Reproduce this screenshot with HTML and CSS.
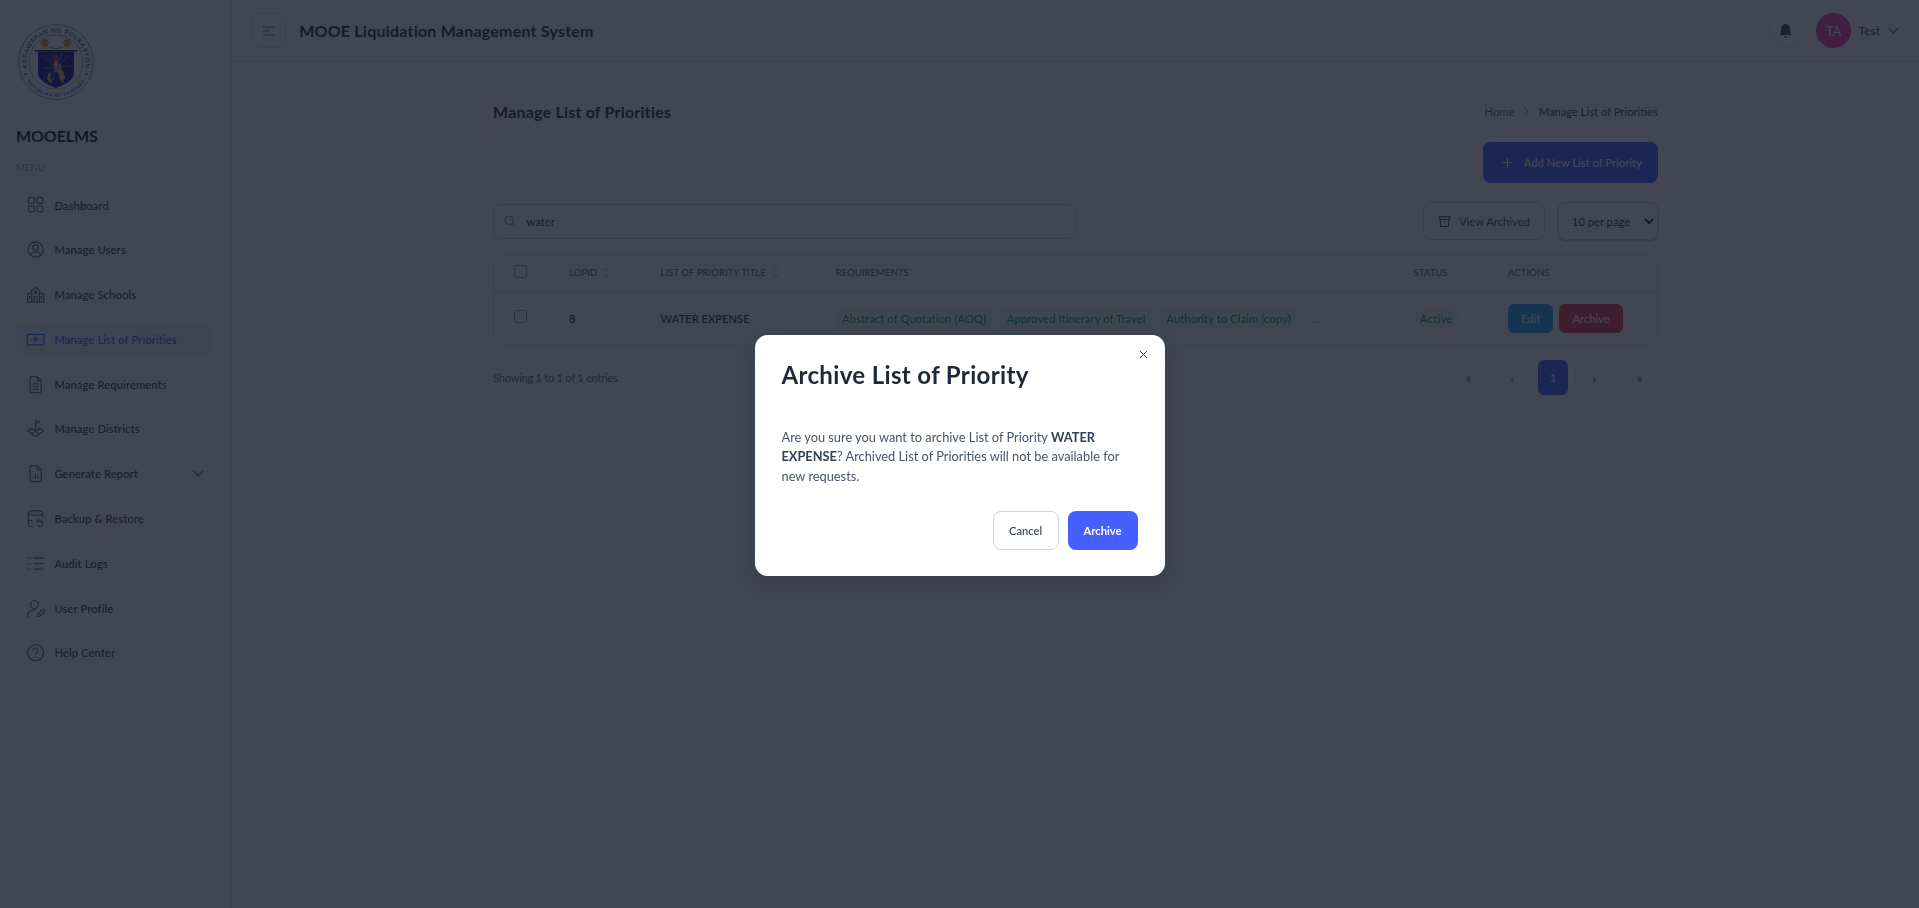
FILE: index.html
```html
<!DOCTYPE html>
<html lang="en">
<head>
<meta charset="utf-8">
<title>MOOE Liquidation Management System</title>
<link rel="stylesheet" href="styles.css">
</head>
<body>
<div class="app">
  <aside class="sidebar">
    <svg class="logo" viewBox="0 0 76 76" aria-label="Kagawaran ng Edukasyon seal">
      <defs>
        <path id="arcTop" d="M9.150 44.100 A29.500 29.500 0 1 1 66.850 44.100"/>
        <path id="arcBottom" d="M6.300 52.800 A35 35 0 0 0 69.700 52.800"/>
      </defs>
      <circle cx="38" cy="38" r="37.400" fill="#fff" stroke="#1a2a80" stroke-width=".5"/>
      <circle cx="38" cy="38" r="27" fill="#fff" stroke="#1a2a80" stroke-width=".4"/>
      <text class="logo-top"><textPath href="#arcTop" startOffset="50%" text-anchor="middle">KAGAWARAN NG EDUKASYON</textPath></text>
      <text class="logo-bottom"><textPath href="#arcBottom" startOffset="50%" text-anchor="middle">REPUBLIKA NG PILIPINAS</textPath></text>
      <circle cx="7.500" cy="50" r="1" fill="#1a2a80"/><circle cx="68.500" cy="50" r="1" fill="#1a2a80"/>
      <path d="M25 14l4 1 2 4-2 4-5-1-2-4z M51 14l-4 1-2 4 2 4 5-1 2-4z" fill="#e0a83a"/>
      <path d="M31 23q7 3 14 0" fill="none" stroke="#333" stroke-width="1" stroke-dasharray="1 .6"/>
      <path d="M17 26h42v1.400H17z" fill="#333"/>
      <path d="M20 27.500h36v21c0 8-9 12-18 15.500-9-3.500-18-7.500-18-15.500z" fill="#14148c"/>
      <path d="M38 44L24 32M38 44L28 30M38 44L34 29M38 44L44 29M38 44L50 32M38 44L25 44M38 44L52 42M38 44L28 54M38 44L34 58" stroke="#fff" stroke-width=".35"/>
      <path d="M36 37c-1-4 0-6 2-8 2 2 3 5 2 8z" fill="#d8283f"/>
      <path d="M36 37h4l-.6 11h-2.800z" fill="#e8b84a"/>
      <path d="M41 39l3 3-1 3 3 3-1 2 3 3-2 2-1 4-3-3-1-5-2-4 2-3z" fill="#e8b84a"/>
      <path d="M31 48l2 2-1 4 2 3-2 2-3-4z" fill="#e8b84a"/>
    </svg>
    <div class="brand">MOOELMS</div>
    <div class="menu-label">MENU</div>
    <nav class="nav">
      <a class="nav-item"><svg class="nav-icon" viewBox="0 0 24 24"><rect x="3" y="3" width="7.500" height="7.500" rx="1.800"/><rect x="13.500" y="3" width="7.500" height="7.500" rx="1.800"/><rect x="3" y="13.500" width="7.500" height="7.500" rx="1.800"/><rect x="13.500" y="13.500" width="7.500" height="7.500" rx="1.800"/></svg><span>Dashboard</span></a>
      <a class="nav-item"><svg class="nav-icon" viewBox="0 0 24 24"><circle cx="12" cy="12" r="9.500"/><circle cx="12" cy="9.500" r="3.300"/><path d="M5.800 19c1-3 3.300-4.500 6.200-4.500s5.200 1.500 6.200 4.500"/></svg><span>Manage Users</span></a>
      <a class="nav-item"><svg class="nav-icon" viewBox="0 0 24 24"><path d="M2 21V11.500q0-1 1-1h4M22 21V11.500q0-1-1-1h-4M1.500 21.500h21M7 21.500V7l5-4 5 4v14.500"/><circle cx="12" cy="9" r="1.500"/><path d="M9.800 21.500v-5a2.200 2.200 0 0 1 4.400 0v5M4.500 14v3M19.500 14v3"/></svg><span>Manage Schools</span></a>
      <a class="nav-item active"><svg class="nav-icon" viewBox="0 0 24 24"><rect x="1.500" y="5.500" width="21" height="13" rx="2"/><circle cx="12" cy="12" r="2"/><path d="M6 12h.5M17.500 12h.5"/></svg><span>Manage List of Priorities</span></a>
      <a class="nav-item"><svg class="nav-icon" viewBox="0 0 24 24"><path d="M14 2H7a2 2 0 0 0-2 2v16a2 2 0 0 0 2 2h10a2 2 0 0 0 2-2V7z"/><path d="M14 2v5h5M8.500 11h7M8.500 14.500h7M8.500 18h7"/></svg><span>Manage Requirements</span></a>
      <a class="nav-item"><svg class="nav-icon" viewBox="0 0 24 24"><path d="M12 13V1.500l5 2.500-5 2.500"/><path d="M7 11.500l-5 3.500 5 3.500 5-3.500 5 3.500 5-3.500-5-3.500-5 3.500zM7 18.500l5 3.500 5-3.500"/></svg><span>Manage Districts</span></a>
      <a class="nav-item"><svg class="nav-icon" viewBox="0 0 24 24"><path d="M14 2H7a2 2 0 0 0-2 2v16a2 2 0 0 0 2 2h10a2 2 0 0 0 2-2V7z"/><path d="M14 2v5h5M9 18v-2.500M12 18v-5M15 18v-3.500"/></svg><span>Generate Report</span><svg class="nav-chevron" viewBox="0 0 16 16"><path d="M2 5l6 6 6-6"/></svg></a>
      <a class="nav-item"><svg class="nav-icon" viewBox="0 0 24 24"><ellipse cx="12" cy="5" rx="9" ry="3"/><path d="M3 5v14q0 2.500 5 3M21 5v5M3 12q0 2.500 5 3"/><path d="M13 15h5a3.500 3.500 0 1 1-3.500 5M13 15l2-2M13 15l2 2"/></svg><span>Backup &amp; Restore</span></a>
      <a class="nav-item"><svg class="nav-icon" viewBox="0 0 24 24"><path d="M9.500 5h12M9.500 12h12M9.500 19h12"/><path class="dots" d="M2 5h4M2 12h4M2 19h4"/></svg><span>Audit Logs</span></a>
      <a class="nav-item"><svg class="nav-icon" viewBox="0 0 24 24"><circle cx="10.500" cy="7" r="5"/><path d="M2 22c0-5 3.500-8 8.500-8"/><path d="M14 22l1-3 5.500-5.500a1.500 1.500 0 0 1 2.500 2.500L17 21.500z"/></svg><span>User Profile</span></a>
      <a class="nav-item"><svg class="nav-icon" viewBox="0 0 24 24"><circle cx="12" cy="12" r="10"/><path d="M9 9.500a3 3 0 1 1 4.500 2.600c-1 .6-1.500 1.300-1.500 2.400M12 17.500v.5"/></svg><span>Help Center</span></a>
    </nav>
  </aside>

  <div class="main-column">
    <header class="topbar">
      <div class="topbar-left">
        <button class="menu-btn" type="button"><svg viewBox="0 0 16 12"><path d="M1 1h14M1 6h8M1 11h14"/></svg></button>
        <h1 class="app-title">MOOE Liquidation Management System</h1>
      </div>
      <div class="topbar-right">
        <button class="bell-btn" type="button"><svg viewBox="0 0 24 24"><path d="M12 2a2 2 0 0 1 2 1.500c3 1 4.500 3.500 4.500 6.500v5l2 3.500h-17l2-3.500v-5c0-3 1.500-5.500 4.500-6.500A2 2 0 0 1 12 2zM9.500 20h5a2.500 2.500 0 0 1-5 0z"/></svg></button>
        <span class="avatar">TA</span>
        <span class="user-name">Test</span>
        <svg class="user-chevron" viewBox="0 0 16 16"><path d="M2 5l6 6 6-6"/></svg>
      </div>
    </header>

    <main class="content">
      <div class="page-head">
        <h2 class="page-title">Manage List of Priorities</h2>
        <div class="breadcrumb"><span class="crumb-home">Home</span><svg viewBox="0 0 8 12"><path d="M1.500 1l5 5-5 5"/></svg><span class="crumb-current">Manage List of Priorities</span></div>
      </div>
      <div class="add-row">
        <button class="add-btn" type="button"><svg viewBox="0 0 12 12"><path d="M6 .5v11M.5 6h11"/></svg>Add New List of Priority</button>
      </div>
      <div class="toolbar">
        <div class="search"><svg viewBox="0 0 24 24"><circle cx="11" cy="11" r="8.500"/><path d="M17.500 17.500L22 22"/></svg><span>water</span></div>
        <div class="toolbar-right">
          <button class="archived-btn" type="button"><svg viewBox="0 0 24 24"><path d="M2.500 3h19v5h-19zM4.500 8v13h15V8M9.500 12.500h5"/></svg>View Archived</button>
          <select class="per-page"><option>10 per page</option></select>
        </div>
      </div>
      <div class="table-wrap">
        <table class="data-table">
          <thead>
            <tr>
              <th class="col-check"><span class="checkbox"></span></th>
              <th class="col-id"><span class="sort-head">LOPID<svg viewBox="0 0 8 14"><path d="M1 5l3-3.500L7 5M1 9l3 3.500L7 9"/></svg></span></th>
              <th class="col-title"><span class="sort-head">LIST OF PRIORITY TITLE<svg viewBox="0 0 8 14"><path d="M1 5l3-3.500L7 5M1 9l3 3.500L7 9"/></svg></span></th>
              <th class="col-req">REQUIREMENTS</th>
              <th class="col-status">STATUS</th>
              <th class="col-actions">ACTIONS</th>
            </tr>
          </thead>
          <tbody>
            <tr>
              <td><span class="checkbox"></span></td>
              <td class="strong">8</td>
              <td class="strong">WATER EXPENSE</td>
              <td><div class="chips"><span class="chip">Abstract of Quotation (AOQ)</span><span class="chip">Approved Itinerary of Travel</span><span class="chip">Authority to Claim (copy)</span><span class="more">...</span></div></td>
              <td><span class="status">Active</span></td>
              <td><div class="actions"><button class="edit-btn" type="button">Edit</button><button class="archive-btn" type="button">Archive</button></div></td>
            </tr>
          </tbody>
        </table>
      </div>
      <div class="table-foot">
        <span class="entries">Showing 1 to 1 of 1 entries</span>
        <div class="pager">
          <button class="page-btn" type="button">«</button>
          <button class="page-btn" type="button">‹</button>
          <button class="page-btn current" type="button">1</button>
          <button class="page-btn next" type="button">›</button>
          <button class="page-btn" type="button">»</button>
        </div>
      </div>
    </main>
  </div>
</div>

<div class="overlay">
  <div class="modal">
    <svg class="modal-close" viewBox="0 0 10 10"><path d="M1 1l8 8M9 1l-8 8"/></svg>
    <h3 class="modal-title">Archive List of Priority</h3>
    <p class="modal-text">Are you sure you want to archive List of Priority <strong>WATER EXPENSE</strong>? Archived List of Priorities will not be available for new requests.</p>
    <div class="modal-actions">
      <button class="btn-cancel" type="button">Cancel</button>
      <button class="btn-archive" type="button">Archive</button>
    </div>
  </div>
</div>
</body>
</html>
```

FILE: styles.css
```css
* { box-sizing: border-box; }
html, body { margin: 0; height: 100%; }
body {
  font-family: "Lato", "Noto Sans", sans-serif;
  font-size: 11.2px;
  color: #1d2939;
  background: #fff;
  overflow: hidden;
}
button, select { font-family: inherit; }
h1, h2, h3, p { margin: 0; }

.app { display: flex; height: 100vh; }

/* Sidebar */
.sidebar {
  width: 232px;
  flex: none;
  border-right: 1px solid #e4e7ec;
  padding: 24px 17px 0 16px;
}
.logo { display: block; width: 76px; height: 76px; margin-left: 2px; }
.logo-top { font: 400 6.300px "Liberation Sans", sans-serif; fill: #1a2a80; letter-spacing: .55px; }
.logo-bottom { font: 400 5px "Liberation Sans", sans-serif; fill: #1a2a80; letter-spacing: .3px; }
.brand { margin-top: 26px; font-size: 16px; line-height: 20px; font-weight: 700; color: #101828; letter-spacing: -.1px; }
.menu-label { margin-top: 15px; font-size: 9.6px; line-height: 14px; color: #98a2b3; }
.nav { display: flex; flex-direction: column; gap: 12.8px; margin-top: 14px; }
.nav-item {
  display: flex;
  align-items: center;
  gap: 9.6px;
  height: 32px;
  padding: 0 9.6px;
  border-radius: 8px;
  font-size: 11.2px;
  font-weight: 500;
  letter-spacing: .12px;
  color: #344054;
}
.nav-icon { width: 19.2px; height: 19.2px; flex: none; fill: none; stroke: #667085; stroke-width: 1.600; stroke-linecap: round; stroke-linejoin: round; }
.nav-icon .dots { stroke-dasharray: 1.500 1.500; stroke-linecap: butt; }
.nav-item.active { background: #ecf3ff; color: #465fff; }
.nav-item.active .nav-icon { stroke: #465fff; }
.nav-chevron { width: 12.8px; height: 12.8px; margin-left: auto; fill: none; stroke: #344054; stroke-width: 1.300; }

/* Top bar */
.main-column { flex: 1; min-width: 0; }
.topbar {
  display: flex;
  align-items: center;
  justify-content: space-between;
  height: 62px;
  padding: 0 19.2px;
  border-bottom: 1px solid #e4e7ec;
}
.topbar-left, .topbar-right { display: flex; align-items: center; }
.topbar-left { gap: 12.8px; }
.menu-btn, .bell-btn {
  display: flex;
  align-items: center;
  justify-content: center;
  width: 35.2px;
  height: 35.2px;
  padding: 0;
  background: #fff;
  border: 1px solid #e4e7ec;
}
.menu-btn { border-radius: 8px; }
.menu-btn svg { width: 12.8px; height: 10px; fill: none; stroke: #667085; stroke-width: 1.300; }
.bell-btn { border-radius: 50%; margin-right: 12.8px; }
.bell-btn svg { width: 17px; height: 17px; fill: #475467; }
.app-title { font-size: 16px; line-height: 24px; font-weight: 700; color: #1d2939; letter-spacing: .22px; }
.avatar {
  display: flex;
  align-items: center;
  justify-content: center;
  width: 35.2px;
  height: 35.2px;
  border-radius: 50%;
  background: #f83ea8;
  color: #fff;
  font-size: 12.8px;
  font-weight: 500;
}
.user-name { margin-left: 7.5px; font-weight: 500; color: #344054; letter-spacing: .3px; }
.user-chevron { width: 12.8px; height: 12.8px; margin-left: 7px; fill: none; stroke: #475467; stroke-width: 1.300; }

/* Content */
.content { width: 1228.8px; margin: 0 auto; padding: 31px 32px 0; }
.page-head { display: flex; align-items: center; justify-content: space-between; height: 36px; }
.page-title { font-size: 16px; font-weight: 700; color: #1d2939; letter-spacing: .2px; }
.breadcrumb { display: flex; align-items: center; gap: 9px; }
.breadcrumb svg { width: 6.400px; height: 9.600px; fill: none; stroke: #667085; stroke-width: 1; }
.crumb-home { color: #667085; }
.crumb-current { color: #344054; }
.add-row { display: flex; justify-content: flex-end; margin-top: 13px; }
.add-btn {
  display: flex;
  align-items: center;
  gap: 11px;
  height: 41px;
  padding: 0 16px 0 19px;
  border: 0;
  border-radius: 8px;
  background: #465fff;
  color: #fff;
  font-size: 11.2px;
  font-weight: 500;
}
.add-btn svg { width: 11px; height: 11px; fill: none; stroke: #fff; stroke-width: 1.200; }
.toolbar { display: flex; align-items: center; justify-content: space-between; margin-top: 19px; height: 38px; }
.search {
  display: flex;
  align-items: center;
  gap: 11px;
  width: 584px;
  height: 35px;
  padding: 0 10px;
  border: 1px solid #d0d5dd;
  border-radius: 8px;
  color: #344054;
}
.search svg { width: 11.500px; height: 11.500px; fill: none; stroke: #667085; stroke-width: 1.800; }
.toolbar-right { display: flex; align-items: center; gap: 13px; }
.archived-btn {
  display: flex;
  align-items: center;
  gap: 8px;
  height: 38px;
  padding: 0 14px;
  background: #fff;
  border: 1px solid #d0d5dd;
  border-radius: 8px;
  color: #475467;
  font-size: 11.2px;
  font-weight: 500;
}
.archived-btn svg { width: 13px; height: 13px; fill: none; stroke: #475467; stroke-width: 2; }
.per-page {
  width: 100px;
  height: 38px;
  padding: 0 0 0 9px;
  background: #fff;
  border: 1px solid #d0d5dd;
  border-radius: 8px;
  box-shadow: 0 1px 2px rgba(16, 24, 40, .3);
  color: #1d2939;
  font-size: 11.2px;
}

/* Table */
.table-wrap { margin-top: 14px; border: 1px solid #e4e7ec; border-radius: 9.600px; }
.data-table { width: 100%; border-collapse: collapse; table-layout: fixed; }
.data-table th {
  height: 36px;
  padding: 0 16px;
  border-bottom: 1px solid #e4e7ec;
  text-align: left;
  font-size: 9.6px;
  font-weight: 500;
  color: #667085;
}
.data-table td { height: 54px; padding: 0 16px; vertical-align: middle; }
.data-table th:first-child, .data-table td:first-child { padding: 0 0 0 20px; }
.col-check { width: 59px; }
.col-id { width: 91.500px; }
.col-title { width: 175px; }
.col-req { width: 578px; }
.col-status { width: 94.500px; }
.col-actions { width: 165px; }
.sort-head { display: inline-flex; align-items: center; gap: 6px; }
.sort-head svg { width: 7px; height: 12px; fill: none; stroke: #98a2b3; stroke-width: .9; }
.checkbox { display: block; width: 12.8px; height: 12.8px; margin-bottom: 3px; border: 1px solid #98a2b3; border-radius: 3px; }
.strong { font-weight: 500; color: #1d2939; }
.chips { display: flex; align-items: center; gap: 8px; }
.chip {
  display: flex;
  align-items: center;
  height: 22px;
  padding: 0 6.400px;
  border-radius: 4px;
  background: #ecfdf3;
  color: #039855;
  letter-spacing: .1px;
  white-space: nowrap;
}
.more { margin-left: 6px; color: #667085; }
.status {
  display: inline-flex;
  align-items: center;
  height: 18px;
  padding: 0 6.400px;
  border-radius: 9px;
  background: #ecfdf3;
  color: #039855;
  letter-spacing: .3px;
}
.actions { display: flex; gap: 6px; }
.edit-btn, .archive-btn {
  height: 29px;
  padding: 0;
  border: 0;
  border-radius: 6.400px;
  color: #fff;
  font-size: 11.2px;
  font-weight: 500;
}
.edit-btn { width: 45px; background: #1ea7ff; }
.archive-btn { width: 64px; background: #e83a50; }
.table-foot { display: flex; align-items: center; justify-content: space-between; margin-top: 14px; }
.entries { color: #667085; letter-spacing: -.3px; }
.pager { display: flex; align-items: center; gap: 7px; }
.page-btn {
  width: 37px;
  height: 32px;
  padding: 0;
  background: #fff;
  border: 1px solid #eaecf0;
  border-radius: 6.400px;
  color: #667085;
  font-size: 12.8px;
}
.page-btn.next { width: 39px; }
.page-btn.current { width: 30px; height: 35px; border: 0; background: #465fff; color: #fff; font-size: 11.2px; }

/* Modal */
.overlay {
  position: fixed;
  inset: 0;
  display: flex;
  align-items: center;
  justify-content: center;
  padding-top: 3px;
  background: rgba(17, 24, 39, .8);
}
.modal {
  position: relative;
  width: 410px;
  padding: 25px 27px 25.6px;
  background: #fff;
  border-radius: 12.800px;
  box-shadow: 0 8px 20px rgba(16, 24, 40, .2);
}
.modal-close { position: absolute; top: 14.500px; right: 16.500px; width: 9px; height: 9px; fill: none; stroke: #344054; stroke-width: 1.100; }
.modal-title { font-size: 24px; line-height: 30px; font-weight: 700; color: #1d2939; letter-spacing: .35px; }
.modal-text { margin-top: 38px; font-size: 12.8px; line-height: 19.2px; color: #475467; }
.modal-text strong { font-weight: 700; color: #344054; }
.modal-actions { display: flex; justify-content: flex-end; gap: 9px; margin-top: 25.600px; }
.btn-cancel, .btn-archive { height: 39px; border-radius: 8px; font-size: 11.2px; font-weight: 500; padding: 0; }
.btn-cancel { width: 66px; background: #fff; border: 1px solid #d0d5dd; color: #344054; }
.btn-archive { width: 70px; background: #465fff; border: 0; color: #fff; font-weight: 700; }
```
